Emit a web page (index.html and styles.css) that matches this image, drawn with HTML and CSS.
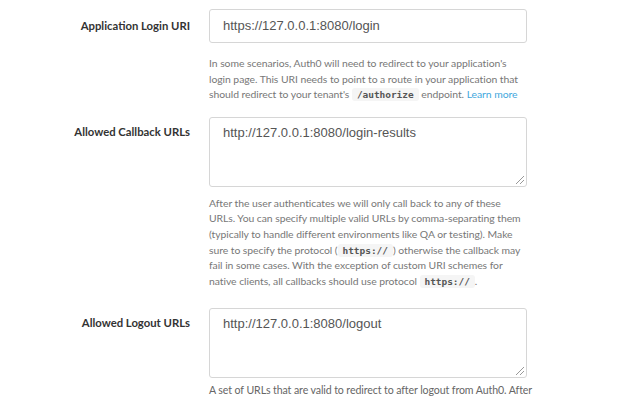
FILE: index.html
```html
<!DOCTYPE html>
<html>
<head>
<meta charset="utf-8">
<link rel="stylesheet" href="styles.css">
</head>
<body>
<div class="form">
  <div class="row">
    <label class="label label-input">Application Login URI</label>
    <div class="field">
      <div class="input">https://127.0.0.1:8080/login</div>
      <p class="help help-first">In some scenarios, Auth0 will need to redirect to your application's<br>login page. This URI needs to point to a route in your application that<br>should redirect to your tenant's <code>/authorize</code> endpoint. <a class="link">Learn more</a></p>
    </div>
  </div>
  <div class="row row-area">
    <label class="label label-area">Allowed Callback URLs</label>
    <div class="field">
      <div class="textarea">http://127.0.0.1:8080/login-results<span class="grip"></span></div>
      <p class="help">After the user authenticates we will only call back to any of these<br>URLs. You can specify multiple valid URLs by comma-separating them<br>(typically to handle different environments like QA or testing). Make<br>sure to specify the protocol (<code>https://</code>) otherwise the callback may<br>fail in some cases. With the exception of custom URI schemes for<br>native clients, all callbacks should use protocol <code>https://</code>.</p>
    </div>
  </div>
  <div class="row row-area2">
    <label class="label label-area">Allowed Logout URLs</label>
    <div class="field">
      <div class="textarea">http://127.0.0.1:8080/logout<span class="grip"></span></div>
      <p class="help help-last">A set of URLs that are valid to redirect to after logout from Auth0. After<br>a user is logged out from Auth0 you can redirect them with the returnTo query parameter.</p>
    </div>
  </div>
</div>
</body>
</html>
```
FILE: styles.css
```css
html, body {
  margin: 0;
  padding: 0;
  background: #fff;
  overflow: hidden;
}
body {
  font-family: "Lato", "Open Sans", sans-serif;
  color: #333;
}
.form {
  display: flex;
  flex-direction: column;
  padding-top: 9px;
}
.row {
  display: grid;
  grid-template-columns: 190px 318px;
  column-gap: 19px;
}
.row-area { margin-top: 14px; }
.row-area2 { margin-top: 19px; }
.label {
  text-align: right;
  font-weight: 700;
  font-size: 11.3px;
  color: #333;
  line-height: 16px;
}
.label-input { padding-top: 9px; }
.label-area { padding-top: 7px; }
.field {
  display: flex;
  flex-direction: column;
}
.input, .textarea {
  box-sizing: border-box;
  border: 1px solid #d6d6d6;
  border-radius: 3px;
  font-family: "Liberation Sans", Arial, sans-serif;
  font-size: 13px;
  color: #555;
  padding: 0 13px;
  background: #fff;
}
.input {
  height: 34px;
  line-height: 32px;
}
.textarea {
  position: relative;
  height: 70px;
  padding-top: 7px;
  line-height: 16px;
}
.grip {
  position: absolute;
  right: 2px;
  bottom: 2px;
  width: 8px;
  height: 8px;
  background: linear-gradient(135deg, transparent 45%, #999 45%, #999 52%, transparent 52%, transparent 70%, #999 70%, #999 77%, transparent 77%);
}
.help {
  margin: 9px 0 0;
  font-size: 10.4px;
  letter-spacing: -0.05px;
  line-height: 15.6px;
  color: #777;
  white-space: nowrap;
}
.help-first { margin-top: 13px; }
.help-last {
  margin-top: 5px;
  font-size: 10.6px;
  letter-spacing: -0.1px;
  color: #666;
}
code {
  font-family: "DejaVu Sans Mono", monospace;
  font-size: 9.5px;
  font-weight: 700;
  color: #555;
  background: #f5f5f5;
  border-radius: 3px;
  padding: 1px 5px;
}
.link {
  color: #3fa7dd;
}
```
